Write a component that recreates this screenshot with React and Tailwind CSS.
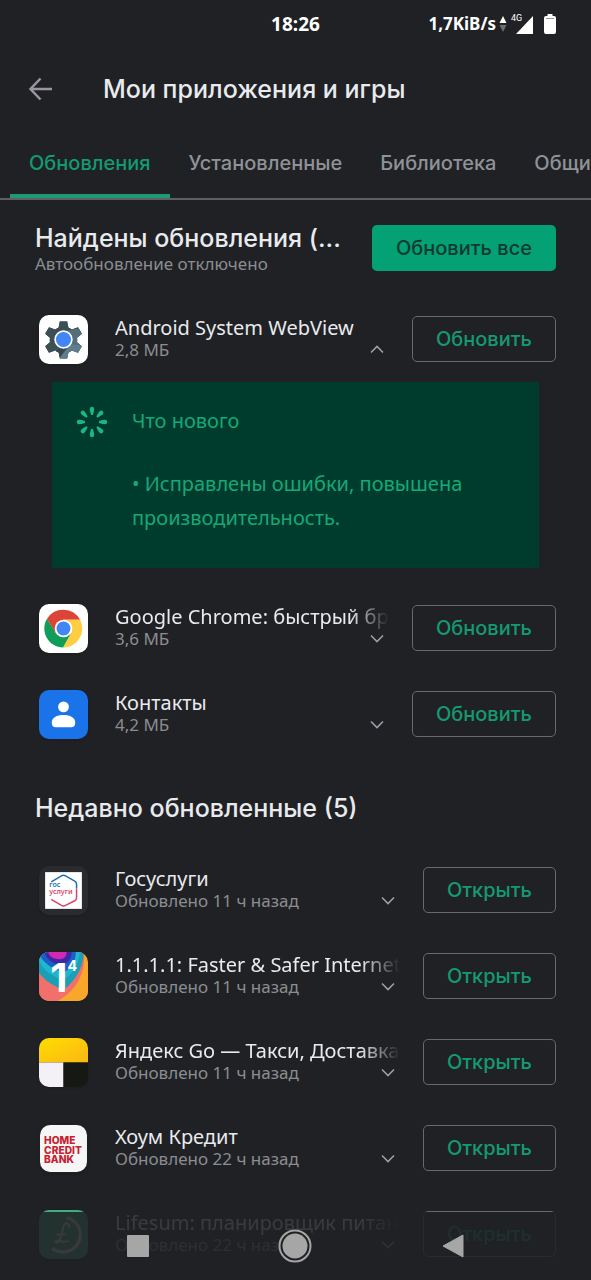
const tabs = ["Обновления", "Установленные", "Библиотека", "Общий доступ"];

function WebViewIcon() {
  return (
    <svg viewBox="0 0 48 48" className="size-full">
      <defs>
        <clipPath id="gear">
          <path d="M20.400 6h7.200l1.200 6.200a13 13 0 0 1 3.400 2l6-2.200 3.800 6.400-4.700 4a13 13 0 0 1 0 4.200l4.700 4-3.800 6.400-6-2.200a13 13 0 0 1-3.400 2l-1.200 5.700h-7.200l-1.200-5.700a13 13 0 0 1-3.400-2l-6 2.200L6 30.600l4.700-4a13 13 0 0 1 0-4.200l-4.700-4L9.800 12l6 2.200a13 13 0 0 1 3.400-2z" />
        </clipPath>
      </defs>
      <rect width="48" height="48" fill="#fff" />
      <g clipPath="url(#gear)">
        <rect width="48" height="48" fill="#455a64" />
        <path d="M0 0h48v20L24 24 12 40 0 30z" fill="#3c4f54" />
        <path d="M24 16 44 12v22L24 44 20 36z" fill="#546e7a" />
        <path d="M26 28 44 30 34 46 20 44z" fill="#607d8b" />
        <path d="M20 42 32 27 26 24 16 36z" fill="#37474f" />
      </g>
      <circle cx="24" cy="24" r="9" fill="#fff" />
      <circle cx="24" cy="24" r="7.400" fill="#4285f4" />
    </svg>
  );
}

function ChromeIcon() {
  return (
    <svg viewBox="0 0 48 48" className="size-full">
      <rect width="48" height="48" fill="#fff" />
      <path d="M7.800 14.500A18.700 18.700 0 0 1 40.300 15.500H24L16 28.500z" fill="#db4437" />
      <path d="M40.300 15.500A18.700 18.700 0 0 1 23.500 42.700l8-14.200L32.500 24 24 15.500z" fill="#ffcd40" />
      <path d="M7.800 14.500A18.700 18.700 0 0 0 23.500 42.700l8-14.200-7 4-8.200-4z" fill="#0f9d58" />
      <circle cx="24" cy="24" r="8.600" fill="#fff" />
      <circle cx="24" cy="24" r="6.800" fill="#4285f4" />
    </svg>
  );
}

function ContactsIcon() {
  return (
    <svg viewBox="0 0 48 48" className="size-full">
      <rect width="48" height="48" fill="#1a73e8" />
      <circle cx="24" cy="16.500" r="5.300" fill="#fff" />
      <path d="M12.500 32c0-5 5-7.500 11.500-7.500S35.500 27 35.500 32c0 3-1.500 4.500-4 4.500h-15c-2.500 0-4-1.500-4-4.500z" fill="#fff" />
    </svg>
  );
}

function GosuslugiIcon() {
  return (
    <svg viewBox="0 0 48 48" className="size-full">
      <rect width="48" height="48" fill="#2a2b2e" />
      <rect x="6" y="6" width="36" height="36" fill="#fff" />
      <path d="M12 15.500 22 9.600q2-1 4 0l9 5.200q1.800 1 1.800 3V22" fill="none" stroke="#1f6fae" strokeWidth="1.500" />
      <path d="M36.800 22v9q0 2-1.800 3l-9 4.600q-2 1-4 0L12 32.700" fill="none" stroke="#d5476a" strokeWidth="1.500" />
      <text x="10" y="21" fontFamily="Noto Sans" fontSize="7" fontWeight="600" fill="#1f6fae">гос</text>
      <text x="10" y="27" fontFamily="Noto Sans" fontSize="7" fontWeight="600" fill="#d5476a">услуги</text>
    </svg>
  );
}

function WarpIcon() {
  return (
    <svg viewBox="0 0 48 48" className="size-full">
      <rect width="48" height="48" fill="#f9a72b" />
      <path d="M0 0h44c2 20-7 38-26 48H0z" fill="#f2706c" />
      <path d="M0 0h44c-1 16-8 28-20 37C14 33 5 28 0 20z" fill="#1b9fb4" />
      <path d="M0 0h40c-1 12-6 21-16 27C12 24 3 17 0 8z" fill="#1fb6cf" />
      <path d="M0 0h36c0 9-4 16-12 20C12 17 4 10 0 2z" fill="#1c5fc8" />
      <path d="M5 0h27c0 7-4 11-10 13C14 12 7 7 5 0z" fill="#3a2aa4" />
      <path d="M9 0h18c0 5-3 7-7 7C15 7 10 5 9 0z" fill="#d526b4" />
      <path d="M48 30c-9 11-18 14-28 18h28z" fill="#f9a72b" />
      <text x="11" y="39" fontFamily="Inter" fontSize="39" fontWeight="700" fill="#fff">1</text>
      <text x="28" y="19" fontFamily="Inter" fontSize="14" fontWeight="700" fill="#fff">4</text>
    </svg>
  );
}

function YandexGoIcon() {
  return (
    <svg viewBox="0 0 48 48" className="size-full">
      <defs>
        <linearGradient id="taxi" x1="0" y1="0" x2="1" y2="1">
          <stop offset="0" stopColor="#ffdd00" />
          <stop offset="1" stopColor="#fbb714" />
        </linearGradient>
      </defs>
      <rect width="48" height="24" fill="url(#taxi)" />
      <rect y="24" width="24" height="24" fill="#f3f1f5" />
      <rect x="24" y="24" width="24" height="24" fill="#161814" />
    </svg>
  );
}

function HomeCreditIcon() {
  return (
    <svg viewBox="0 0 48 48" className="size-full">
      <rect x="1" y="1" width="46" height="46" rx="10" fill="#f6f6f7" />
      <g fontFamily="Inter" fontSize="10" fontWeight="800" fill="#c8202f">
        <text x="5" y="20">HOME</text>
        <text x="5" y="29">CREDIT</text>
        <text x="5" y="38">BANK</text>
      </g>
    </svg>
  );
}

function LifesumIcon() {
  return (
    <svg viewBox="0 0 48 48" className="size-full">
      <rect width="48" height="48" fill="#3fae7c" />
      <path d="M27 7.500a17 17 0 1 1-14 30" fill="none" stroke="#eadfe2" strokeWidth="3" />
      <path d="M29 18c2-5-3-7-5-2-2 6-2 12-5 15-2 2-4 0-2-1 3-1 6 3 12 0M17 24h9" fill="none" stroke="#eadfe2" strokeWidth="2" />
    </svg>
  );
}

function Chevron({ up }) {
  return (
    <svg viewBox="0 0 24 24" className="size-6" fill="none" stroke="#9aa0a6" strokeWidth="1.600">
      <path d={up ? "M6 14.500l6-6 6 6" : "M6 8.500l6 6 6-6"} />
    </svg>
  );
}

function AppRow({ icon, title, info, action, open, fade }) {
  return (
    <li className="flex h-[86px] items-center pr-[35px] pl-[39px]">
      <div className="size-[49px] shrink-0 overflow-hidden rounded-[10px] shadow-sm">{icon}</div>
      <div className="ml-[27px] min-w-0 flex-1 pb-0.5">
        <h3
          className={
            fade
              ? "overflow-hidden text-xl leading-6 whitespace-nowrap text-[#e8eaed] [mask-image:linear-gradient(to_left,transparent,black_40px)]"
              : "overflow-hidden text-xl leading-6 whitespace-nowrap text-[#e8eaed]"
          }
        >
          {title}
        </h3>
        <div className="flex h-5 items-center justify-between">
          <p className="text-[17px] leading-5 whitespace-nowrap text-[#8a8d91]">{info}</p>
          <button type="button" aria-label="Подробнее" aria-expanded={!!open}>
            <Chevron up={open} />
          </button>
        </div>
      </div>
      <button
        type="button"
        className="ml-[23px] h-[46px] shrink-0 rounded-[5px] border border-[#66696d] px-[23px] font-[Inter,sans-serif] text-xl font-medium text-[#149a70]"
      >
        {action}
      </button>
    </li>
  );
}

export default function App() {
  return (
    <div className="min-h-screen overflow-hidden bg-[#202124] font-['Noto_Sans',sans-serif] text-[#e8eaed]">
      <div className="grid h-12 grid-cols-[1fr_auto_1fr] items-center px-[35px] font-bold text-white">
        <span />
        <span className="text-[19px]">18:26</span>
        <div className="flex items-center justify-end">
          <span className="text-[17px]">1,7KiB/s</span>
          <svg viewBox="0 0 8 20" className="mx-[3px] h-5 w-2">
            <path d="M4 2l3.500 7h-7z" fill="#fff" />
            <path d="M4 18l3.500-7h-7z" fill="#6d6e70" />
          </svg>
          <svg viewBox="0 0 24 24" className="size-6">
            <text x="1" y="9" fontFamily="Roboto" fontSize="9" fontWeight="400" fill="#fff">4G</text>
            <path d="M23 4v18H6z" fill="#fff" />
          </svg>
          <svg viewBox="0 0 12 20" className="ml-[10px] h-5 w-3">
            <path d="M3.500 0h5v2H10q2 0 2 2v14q0 2-2 2H2q-2 0-2-2V4q0-2 2-2h1.500z" fill="#fff" />
            <path d="M2 4.500h8" stroke="#9a9a9a" strokeWidth="1" />
          </svg>
        </div>
      </div>

      <header className="flex h-[82px] items-center pl-7">
        <button type="button" aria-label="Назад" className="mr-[51px]">
          <svg viewBox="0 0 24 24" className="size-6" fill="none" stroke="#9a95a3" strokeWidth="2.500">
            <path d="M24 12H2.500M12.500 1.500 2.500 12l10 10.500" />
          </svg>
        </button>
        <h1 className="pt-0.5 font-[Inter,sans-serif] text-[25px] font-medium">Мои приложения и игры</h1>
      </header>

      <nav role="tablist" className="flex h-[70px] overflow-hidden border-b-2 border-[#5f6064] pl-[10px]">
        {tabs.map((tab, i) => (
          <button
            key={tab}
            type="button"
            role="tab"
            aria-selected={i === 0}
            className={
              i === 0
                ? "shrink-0 border-b-4 border-[#1c9a72] px-[19px] pt-0.5 font-[Inter,sans-serif] text-xl font-medium text-[#149a70]"
                : "shrink-0 border-b-4 border-transparent px-[19px] pt-0.5 font-[Inter,sans-serif] text-xl font-medium whitespace-nowrap text-[#8f9296]"
            }
          >
            {tab}
          </button>
        ))}
      </nav>

      <main>
        <section>
          <div className="flex h-24 items-center justify-between px-[35px]">
            <div>
              <h2 className="font-[Inter,sans-serif] text-[25px] leading-8 font-medium whitespace-nowrap">Найдены обновления (...</h2>
              <p className="text-[17px] leading-5 text-[#8a8d91]">Автообновление отключено</p>
            </div>
            <button
              type="button"
              className="h-[46px] shrink-0 rounded-[5px] bg-[#03a173] px-6 font-[Inter,sans-serif] text-xl font-medium text-[#123a31]"
            >
              Обновить все
            </button>
          </div>
          <ul>
            <AppRow icon={<WebViewIcon />} title="Android System WebView" info="2,8 МБ" action="Обновить" open />
            <li className="mx-[52px] mb-[17px] flex h-[186px] bg-[#003c2d] pt-6 pl-6 text-xl text-[#17a877]">
              <svg viewBox="0 0 32 32" className="mr-6 size-8 shrink-0" fill="#1db683">
                {[0, 45, 90, 135, 180, 225, 270, 315].map((a) => (
                  <path key={a} transform={`rotate(${a} 16 16)`} d="M13.800 3q0-2.200 2.200-2.200t2.200 2.200q0 2-1.300 6h-1.800Q13.800 5 13.800 3z" />
                ))}
              </svg>
              <div>
                <h4 className="leading-[30px]">Что нового</h4>
                <p className="mt-[31px] leading-[34px]">• Исправлены ошибки, повышена<br />производительность.</p>
              </div>
            </li>
            <AppRow icon={<ChromeIcon />} title="Google Chrome: быстрый браузер" info="3,6 МБ" action="Обновить" fade />
            <AppRow icon={<ContactsIcon />} title="Контакты" info="4,2 МБ" action="Обновить" />
          </ul>
        </section>

        <section>
          <h2 className="h-[90px] pt-[35px] pl-[35px] font-[Inter,sans-serif] text-[25px] leading-8 font-medium">Недавно обновленные (5)</h2>
          <ul>
            <AppRow icon={<GosuslugiIcon />} title="Госуслуги" info="Обновлено 11 ч назад" action="Открыть" />
            <AppRow icon={<WarpIcon />} title="1.1.1.1: Faster & Safer Internet" info="Обновлено 11 ч назад" action="Открыть" fade />
            <AppRow icon={<YandexGoIcon />} title="Яндекс Go — Такси, Доставка" info="Обновлено 11 ч назад" action="Открыть" fade />
            <AppRow icon={<HomeCreditIcon />} title="Хоум Кредит" info="Обновлено 22 ч назад" action="Открыть" />
            <AppRow icon={<LifesumIcon />} title="Lifesum: планировщик питания" info="Обновлено 22 ч назад" action="Открыть" fade />
          </ul>
        </section>
      </main>

      <div className="fixed inset-x-0 bottom-0 flex h-[68px] items-center justify-around bg-[#202124]/88 px-[59px]">
        <button type="button" aria-label="Недавние">
          <svg viewBox="0 0 34 34" className="size-[34px]"><rect x="6" y="6" width="22" height="22" rx="1" fill="#a6a6a6" /></svg>
        </button>
        <button type="button" aria-label="Домой">
          <svg viewBox="0 0 34 34" className="size-[34px]">
            <circle cx="17" cy="17" r="15.500" fill="#202124" stroke="#a6a6a6" strokeWidth="2" />
            <circle cx="17" cy="17" r="12.500" fill="#a6a6a6" />
          </svg>
        </button>
        <button type="button" aria-label="Назад">
          <svg viewBox="0 0 34 34" className="size-[34px]"><path d="M27 6v22L7 17z" fill="#a6a6a6" stroke="#a6a6a6" strokeLinejoin="round" /></svg>
        </button>
      </div>
    </div>
  );
}
